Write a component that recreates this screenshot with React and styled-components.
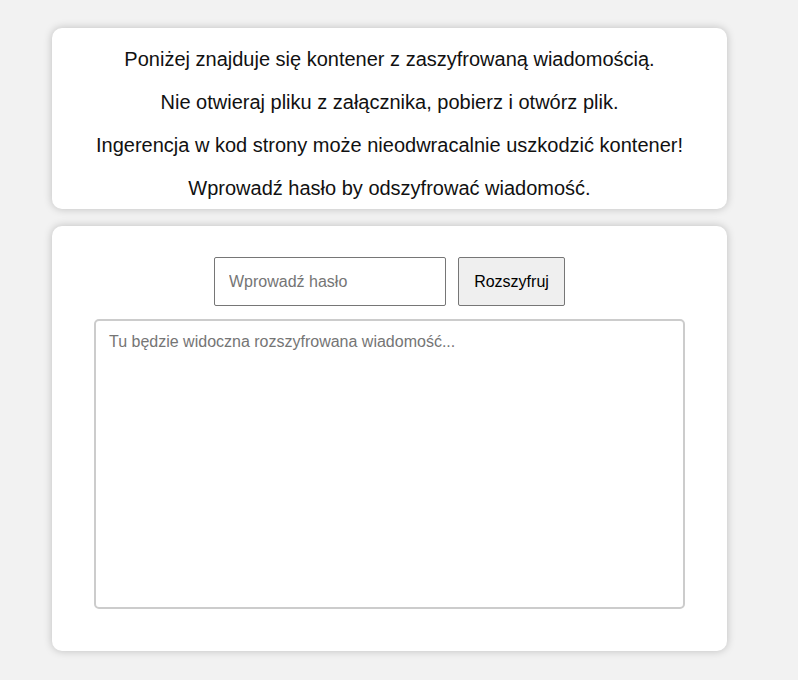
import React from "react";
import styled, { createGlobalStyle } from "styled-components";

const GlobalStyle = createGlobalStyle`
  html, body {
    margin: 0;
    padding: 0;
    background: #f2f2f2;
    font-family: Arial, "Liberation Sans", sans-serif;
  }
`;

const App = () => {
  return (
    <>
      <GlobalStyle />
      <Page>
        <InfoCard>
          <InfoText>Poniżej znajduje się kontener z zaszyfrowaną wiadomością.</InfoText>
          <InfoText>Nie otwieraj pliku z załącznika, pobierz i otwórz plik.</InfoText>
          <InfoText>Ingerencja w kod strony może nieodwracalnie uszkodzić kontener!</InfoText>
          <InfoText>Wprowadź hasło by odszyfrować wiadomość.</InfoText>
        </InfoCard>
        <DecryptCard>
          <FormRow>
            <PasswordInput type="password" placeholder="Wprowadź hasło" />
            <DecryptButton>Rozszyfruj</DecryptButton>
          </FormRow>
          <Output placeholder="Tu będzie widoczna rozszyfrowana wiadomość..." readOnly />
        </DecryptCard>
      </Page>
    </>
  );
};

const Page = styled.div`
  width: 675px;
  margin: 28px 0 0 52px;
  display: flex;
  flex-direction: column;
  gap: 17px;
  padding-bottom: 29px;
`;

const Card = styled.div`
  background: #fff;
  border-radius: 10px;
  box-shadow: 0 0 8px rgba(0, 0, 0, 0.22);
  box-sizing: border-box;
`;

const InfoCard = styled(Card)`
  height: 181px;
  padding: 20px 20px 0;
  display: flex;
  flex-direction: column;
  gap: 20px;
`;

const InfoText = styled.p`
  margin: 0;
  font-size: 20px;
  line-height: 23px;
  color: #111;
  text-align: center;
`;

const DecryptCard = styled(Card)`
  height: 425px;
  padding: 31px 42px 0;
  display: flex;
  flex-direction: column;
  align-items: center;
  gap: 13px;
`;

const FormRow = styled.div`
  display: flex;
  gap: 12px;
  justify-content: center;
`;

const PasswordInput = styled.input`
  width: 232px;
  height: 49px;
  box-sizing: border-box;
  padding: 0 14px;
  font-size: 16px;
  font-family: Arial, "Liberation Sans", sans-serif;
  border: 1px solid #767676;
  border-radius: 2px;
  outline: none;
  &::placeholder {
    color: #757575;
  }
`;

const DecryptButton = styled.button`
  width: 107px;
  height: 49px;
  box-sizing: border-box;
  font-size: 16px;
  font-family: Arial, "Liberation Sans", sans-serif;
  color: #000;
  background: #efefef;
  border: 1px solid #767676;
  border-radius: 2px;
`;

const Output = styled.textarea`
  width: 591px;
  height: 290px;
  box-sizing: border-box;
  padding: 12px 13px;
  font-size: 16px;
  font-family: Arial, "Liberation Sans", sans-serif;
  border: 2px solid #ccc;
  border-radius: 5px;
  resize: none;
  outline: none;
  &::placeholder {
    color: #757575;
  }
`;

export default App;
